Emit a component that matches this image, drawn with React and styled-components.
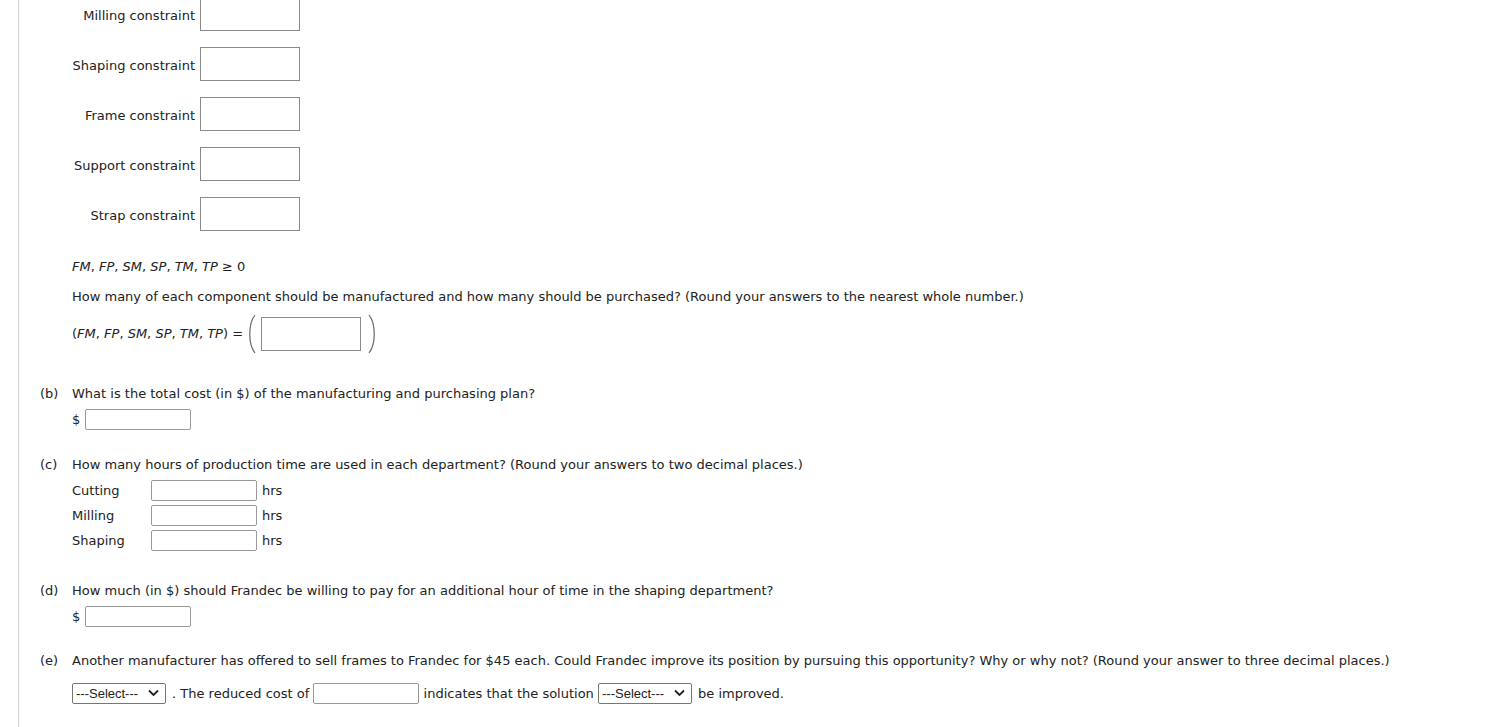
import React from 'react'
import styled, { createGlobalStyle } from 'styled-components'

const Global = createGlobalStyle`
  html, body { margin: 0; padding: 0; background: #fff; }
  body {
    font-family: Verdana, "DejaVu Sans", sans-serif;
    font-size: 13px;
    line-height: 16px;
    color: #222;
  }
`

const Page = styled.div`
  margin-left: 18px;
  border-left: 1px solid #d4d4d4;
  min-height: 727px;
  overflow: hidden;
`

const Constraints = styled.div`
  margin-top: -3px;
  display: flex;
  flex-direction: column;
  gap: 16px;
`

const ConstraintRow = styled.label`
  display: flex;
  align-items: center;
`

const ConstraintLabel = styled.span`
  width: 176px;
  text-align: right;
  margin-right: 5px;
  padding-top: 4px;
`

const BigBox = styled.input`
  box-sizing: border-box;
  width: 100px;
  height: 34px;
  border: 1px solid #8a8a8a;
  margin: 0;
  padding: 0 4px;
  font: inherit;
`

const Indent = styled.div`
  padding-left: 53px;
  margin-top: ${p => p.$top || 0}px;
`

const Var = styled.i`
  font-style: italic;
`

const TupleRow = styled.div`
  display: flex;
  align-items: center;
  height: 34px;
`

const Paren = styled.svg`
  display: block;
  width: 10px;
  height: 40px;
  margin: 0 ${p => p.$gap || 0}px;
  overflow: visible;
`

const Part = styled.div`
  display: grid;
  grid-template-columns: 32px 1fr;
  padding-left: 21px;
  margin-top: ${p => p.$top || 0}px;
`

const Marker = styled.span``

const Body = styled.div`
  display: flex;
  flex-direction: column;
`

const MoneyRow = styled.div`
  display: flex;
  align-items: center;
  margin-top: 7px;
  gap: 2px;
`

const Dollar = styled.span`
  width: 11px;
`

const SmallBox = styled.input`
  box-sizing: border-box;
  width: ${p => p.$w || 106}px;
  height: 21px;
  border: 1px solid #999;
  border-radius: 2px;
  margin: 0;
  padding: 0 4px;
  font: inherit;
`

const HoursGrid = styled.div`
  display: grid;
  grid-template-columns: 74px 106px auto;
  column-gap: 5px;
  row-gap: 4px;
  align-items: center;
  margin-top: 7px;
  justify-items: start;
`

const SelectRow = styled.div`
  display: flex;
  align-items: center;
  margin-top: 14px;
  white-space: nowrap;
`

const SelectWrap = styled.span`
  position: relative;
  display: inline-block;
  margin-right: ${p => p.$r || 6}px;
`

const Select = styled.select`
  box-sizing: border-box;
  appearance: none;
  -webkit-appearance: none;
  width: 94px;
  height: 21px;
  font-family: "Liberation Sans", Arial, sans-serif;
  font-size: 13px;
  color: #222;
  border: 1px solid #767676;
  border-radius: 2px;
  background: #fff;
  margin: 0;
  padding: 0 0 0 3px;
`

const Chevron = styled.svg`
  position: absolute;
  right: 7px;
  top: 6px;
  width: 11px;
  height: 8px;
  pointer-events: none;
`

const LParen = () => (
  <Paren viewBox="0 0 10 40" $gap={4}>
    <path d="M8 1 C1 10 1 30 8 39" fill="none" stroke="#666" strokeWidth="1.2" />
  </Paren>
)

const RParen = () => (
  <Paren viewBox="0 0 10 40" $gap={6}>
    <path d="M2 1 C9 10 9 30 2 39" fill="none" stroke="#666" strokeWidth="1.2" />
  </Paren>
)

const Dropdown = ({ options, r }) => (
  <SelectWrap $r={r}>
    <Select defaultValue="">
      <option value="">---Select---</option>
      {options.map(o => <option key={o}>{o}</option>)}
    </Select>
    <Chevron viewBox="0 0 11 8">
      <path d="M1 1.5 L5.5 6 L10 1.5" fill="none" stroke="#222" strokeWidth="1.8" />
    </Chevron>
  </SelectWrap>
)

const constraints = ['Milling', 'Shaping', 'Frame', 'Support', 'Strap']
const depts = ['Cutting', 'Milling', 'Shaping']

const Vars = () => (
  <>
    <Var>FM</Var>, <Var>FP</Var>, <Var>SM</Var>, <Var>SP</Var>, <Var>TM</Var>, <Var>TP</Var>
  </>
)

export default function App() {
  return (
    <>
      <Global />
      <Page>
        <Constraints>
          {constraints.map(c => (
            <ConstraintRow key={c}>
              <ConstraintLabel>{c} constraint</ConstraintLabel>
              <BigBox type="text" />
            </ConstraintRow>
          ))}
        </Constraints>

        <Indent $top={28}>
          <Vars /> ≥ 0
        </Indent>
        <Indent $top={14}>
          How many of each component should be manufactured and how many should be purchased? (Round your answers to the nearest whole number.)
        </Indent>
        <Indent $top={12}>
          <TupleRow>
            <span>(<Vars />) =</span>
            <LParen />
            <BigBox type="text" />
            <RParen />
          </TupleRow>
        </Indent>

        <Part $top={35}>
          <Marker>(b)</Marker>
          <Body>
            <span>What is the total cost (in $) of the manufacturing and purchasing plan?</span>
            <MoneyRow>
              <Dollar>$</Dollar>
              <SmallBox type="text" $w={106} />
            </MoneyRow>
          </Body>
        </Part>

        <Part $top={27}>
          <Marker>(c)</Marker>
          <Body>
            <span>How many hours of production time are used in each department? (Round your answers to two decimal places.)</span>
            <HoursGrid>
              {depts.map(d => (
                <React.Fragment key={d}>
                  <span>{d}</span>
                  <SmallBox type="text" />
                  <span>hrs</span>
                </React.Fragment>
              ))}
            </HoursGrid>
          </Body>
        </Part>

        <Part $top={32}>
          <Marker>(d)</Marker>
          <Body>
            <span>How much (in $) should Frandec be willing to pay for an additional hour of time in the shaping department?</span>
            <MoneyRow>
              <Dollar>$</Dollar>
              <SmallBox type="text" $w={106} />
            </MoneyRow>
          </Body>
        </Part>

        <Part $top={26}>
          <Marker>(e)</Marker>
          <Body>
            <span>Another manufacturer has offered to sell frames to Frandec for $45 each. Could Frandec improve its position by pursuing this opportunity? Why or why not? (Round your answer to three decimal places.)</span>
            <SelectRow>
              <Dropdown options={['Yes', 'No']} r={6} />
              <span>. The reduced cost of&nbsp;</span>
              <SmallBox type="text" $w={106} />
              <span>&nbsp;indicates that the solution&nbsp;</span>
              <Dropdown options={['can', 'cannot']} r={6} />
              <span>be improved.</span>
            </SelectRow>
          </Body>
        </Part>
      </Page>
    </>
  )
}
